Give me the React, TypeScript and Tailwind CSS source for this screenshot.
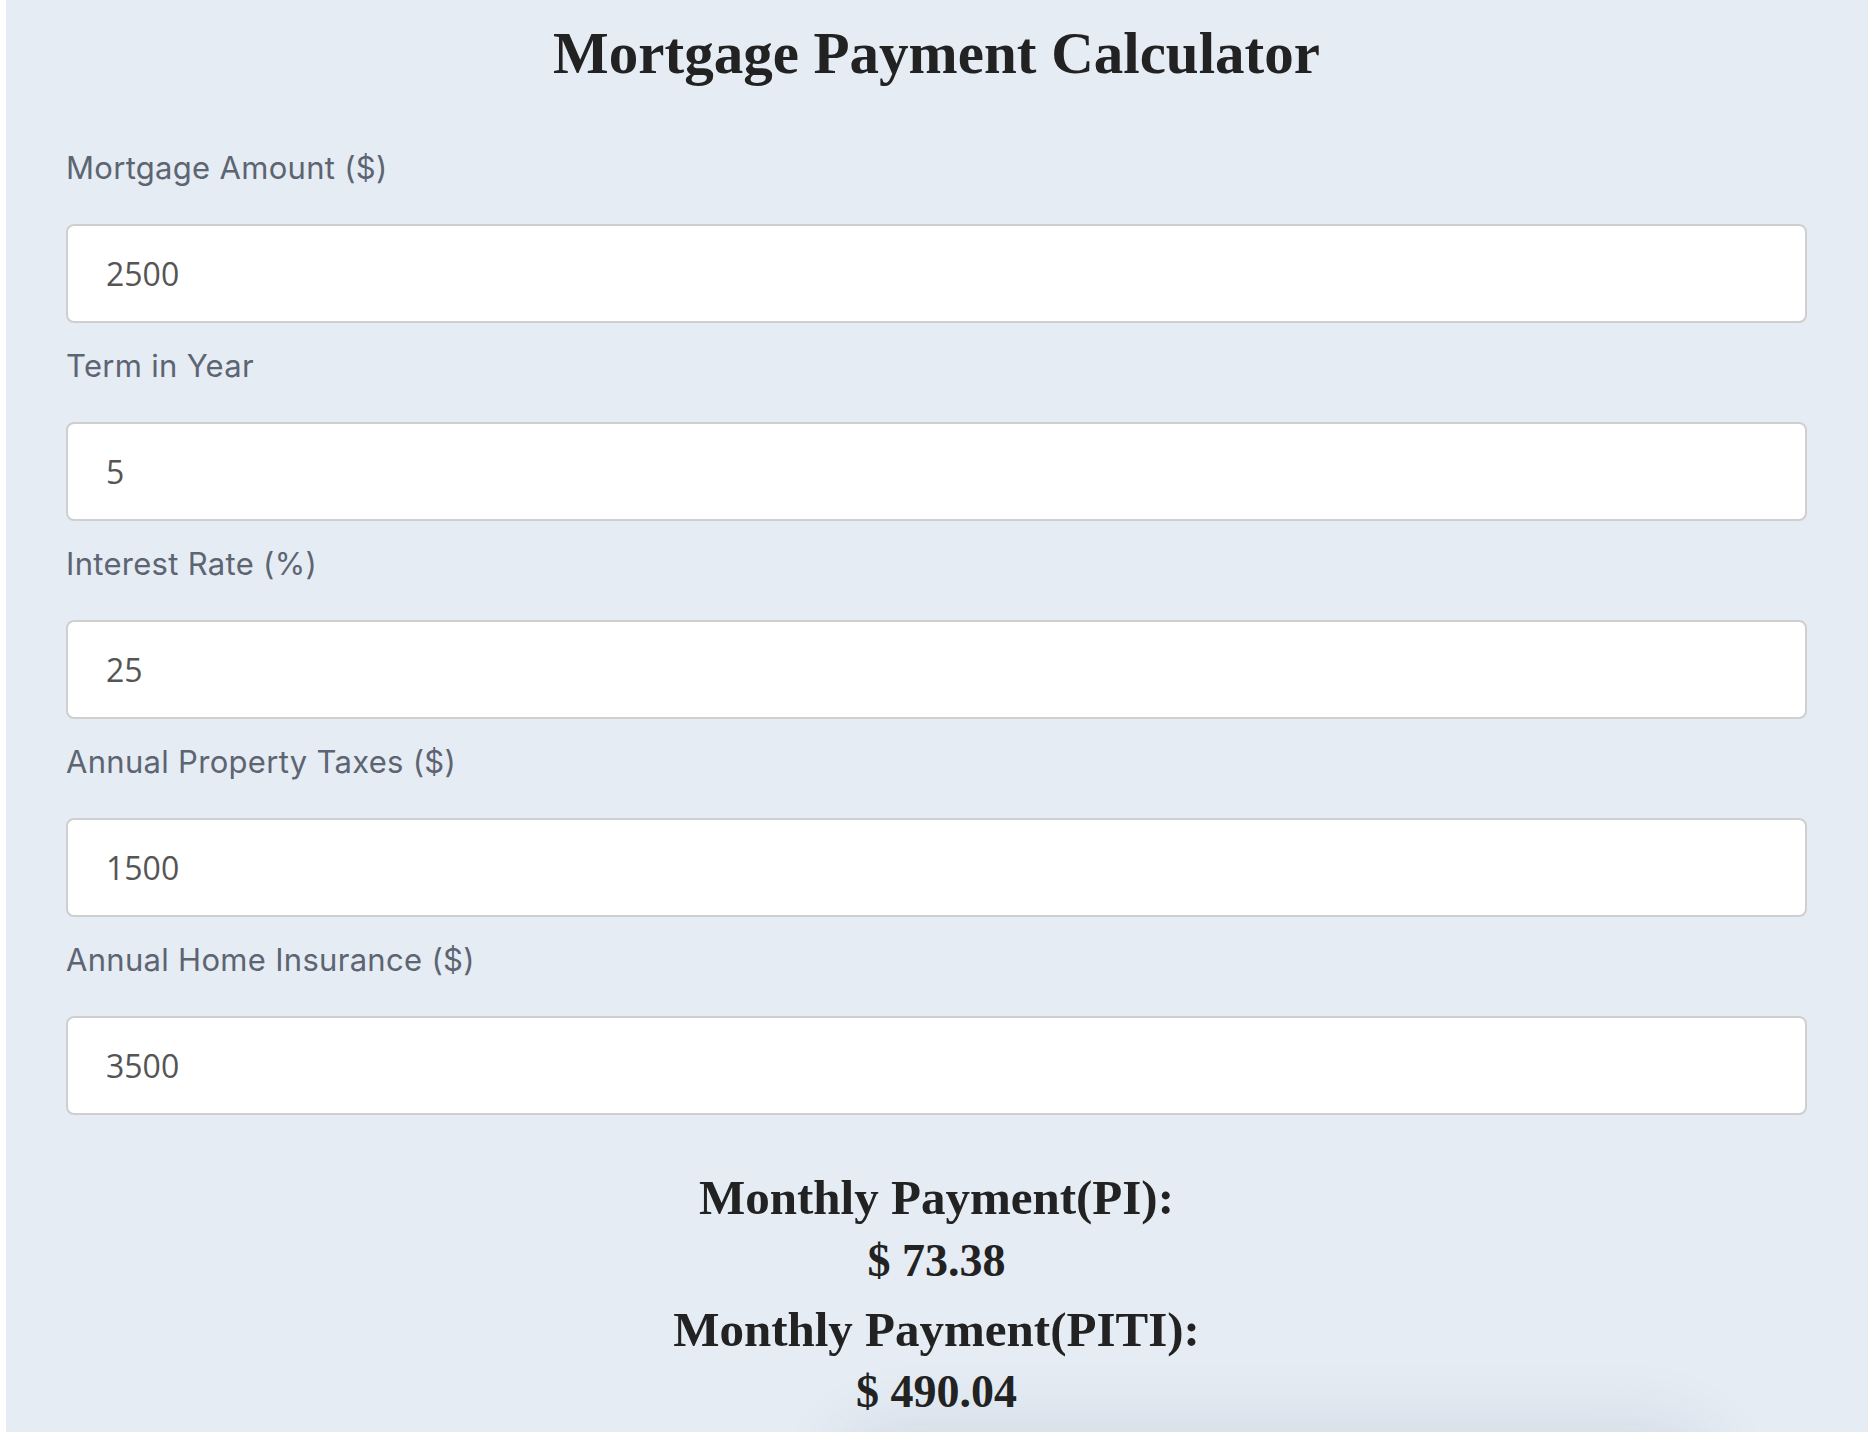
import { useState } from "react";

const fields = [
  { name: "amount", label: "Mortgage Amount ($)" },
  { name: "term", label: "Term in Year" },
  { name: "rate", label: "Interest Rate (%)" },
  { name: "taxes", label: "Annual Property Taxes ($)" },
  { name: "insurance", label: "Annual Home Insurance ($)" },
];

const App = () => {
  const [formData, setFormData] = useState<Record<string, string>>({
    amount: "2500",
    term: "5",
    rate: "25",
    taxes: "1500",
    insurance: "3500",
  });

  const handleChange = (e: React.ChangeEvent<HTMLInputElement>) => {
    setFormData({
      ...formData,
      [e.target.name]: e.target.value,
    });
  };

  const principal = parseFloat(formData.amount) || 0;
  const months = (parseFloat(formData.term) || 0) * 12;
  const r = (parseFloat(formData.rate) || 0) / 100 / 12;
  let pi = 0;
  if (months > 0) {
    pi = r === 0 ? principal / months : (principal * r) / (1 - Math.pow(1 + r, -months));
  }
  const piti =
    pi + (parseFloat(formData.taxes) || 0) / 12 + (parseFloat(formData.insurance) || 0) / 12;

  return (
    <div className="bg-white px-[6px]">
      <div className="relative h-[1432px] overflow-hidden bg-[#e5ecf4] pl-[60px] pr-[61px] pt-[23px]">
        <h1 className="mb-[67px] text-center font-['Liberation_Serif',serif] text-[59px] font-bold leading-[60px] text-[#222]">
          Mortgage Payment Calculator
        </h1>
        <form className="flex flex-col gap-[25px]">
          {fields.map((f) => (
            <div key={f.name} className="flex flex-col">
              <label
                htmlFor={f.name}
                className="font-['Inter',sans-serif] text-[31px] leading-[36px] tracking-[0.3px] text-[#5d6472]"
              >
                {f.label}
              </label>
              <input
                id={f.name}
                name={f.name}
                type="text"
                value={formData[f.name]}
                onChange={handleChange}
                className="mt-[38px] h-[99px] w-full rounded-[8px] border-2 border-[#cfcfcf] bg-white pl-[38px] font-['Open_Sans',sans-serif] text-[32px] text-[#555] outline-none"
              />
            </div>
          ))}
        </form>
        <div className="relative z-10 text-center font-['Liberation_Serif',serif] font-bold text-[#222]">
          <h3 className="mt-[55px] text-[49px] leading-[55px]">Monthly Payment(PI):</h3>
          <p className="mt-[11px] text-[46px] leading-[50px]">$ {pi.toFixed(2)}</p>
          <h3 className="mt-[16px] text-[49px] leading-[55px]">Monthly Payment(PITI):</h3>
          <p className="mt-[10px] text-[46px] leading-[50px]">$ {piti.toFixed(2)}</p>
        </div>
        {/* card peeking from below the fold */}
        <div className="absolute left-[850px] top-[1445px] h-[200px] w-[840px] rounded-[40px] bg-[#dde3eb] shadow-[0_0_70px_20px_rgba(40,60,90,0.1)]" />
      </div>
    </div>
  );
};

export default App;
